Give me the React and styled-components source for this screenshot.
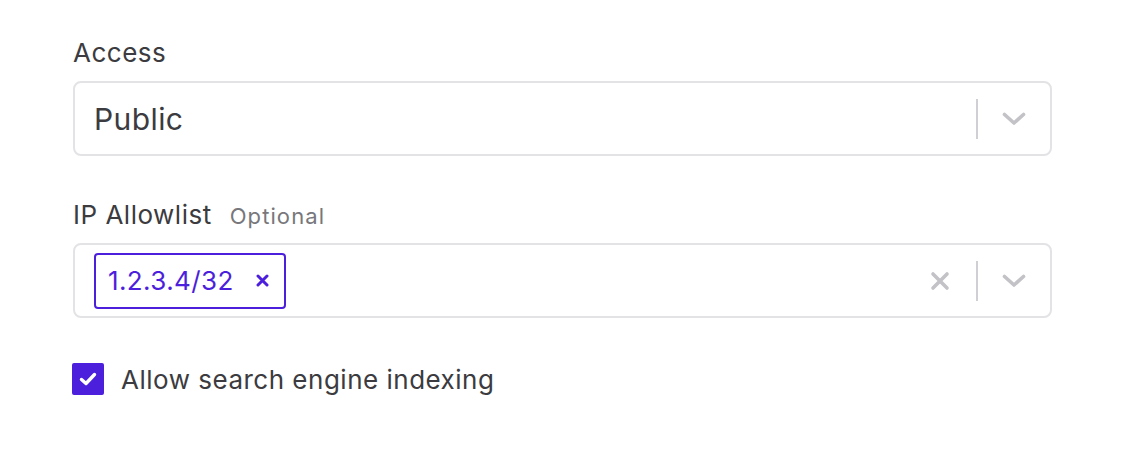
import React, { useState } from 'react'
import styled, { createGlobalStyle } from 'styled-components'

const GlobalStyle = createGlobalStyle`
    body{
        margin: 0;
        background: #fff;
        font-family: Inter, "Noto Sans", "Liberation Sans", sans-serif;
        color: #3b3b40;
    }
`;

function Chevron() {
    return (
        <svg width="24" height="14" viewBox="0 0 24 14" fill="none">
            <path d="M2.5 2.5 L12 11 L21.5 2.5" stroke="#c2c2c7" strokeWidth="3.6" strokeLinecap="round" strokeLinejoin="round" />
        </svg>
    )
}

function ClearIcon() {
    return (
        <svg width="20" height="20" viewBox="0 0 20 20" fill="none">
            <path d="M3 3 L17 17 M17 3 L3 17" stroke="#c2c2c7" strokeWidth="3.6" strokeLinecap="round" />
        </svg>
    )
}

function TagRemove() {
    return (
        <svg width="13" height="13" viewBox="0 0 13 13" fill="none">
            <path d="M2 2 L11 11 M11 2 L2 11" stroke="#4c1fdc" strokeWidth="3" strokeLinecap="round" />
        </svg>
    )
}

function Select({ children, clearable }) {
    return (
        <SelectBox>
            <ValueArea>{children}</ValueArea>
            <Indicators>
                {clearable && <ClearBtn><ClearIcon /></ClearBtn>}
                <Separator />
                <ChevronBtn><Chevron /></ChevronBtn>
            </Indicators>
        </SelectBox>
    )
}

function App() {
    const [indexing, setIndexing] = useState(true)

    return (
        <Page>
            <GlobalStyle />
            <Field>
                <Label>Access</Label>
                <Select>
                    <SingleValue>Public</SingleValue>
                </Select>
            </Field>

            <Field>
                <Label>IP Allowlist <Hint>Optional</Hint></Label>
                <Select clearable>
                    <Tag>
                        <span>1.2.3.4/32</span>
                        <TagX><TagRemove /></TagX>
                    </Tag>
                </Select>
            </Field>

            <CheckRow onClick={() => setIndexing(!indexing)}>
                <Box checked={indexing}>
                    {indexing && (
                        <svg width="18" height="14" viewBox="0 0 18 14" fill="none">
                            <path d="M2.5 7.5 L7 11.5 L15.5 2.5" stroke="#fff" strokeWidth="3.4" strokeLinecap="round" strokeLinejoin="round" />
                        </svg>
                    )}
                </Box>
                <span>Allow search engine indexing</span>
            </CheckRow>
        </Page>
    )
}

const Page = styled.div`
    width: 979px;
    padding: 37px 0 0 73px;
    display: flex;
    flex-direction: column;
    gap: 43px;
`;

const Field = styled.div`
    display: flex;
    flex-direction: column;
    gap: 13px;
`;

const Label = styled.label`
    height: 31px;
    font-size: 26px;
    line-height: 31px;
    letter-spacing: 0.5px;
    color: #3b3b40;
    display: flex;
    align-items: baseline;
    gap: 18px;
`;

const Hint = styled.span`
    font-size: 22px;
    line-height: 31px;
    letter-spacing: 1.1px;
    color: #77777c;
`;

const SelectBox = styled.div`
    box-sizing: border-box;
    height: 75px;
    border: 2px solid #e3e3e6;
    border-radius: 8px;
    display: flex;
    align-items: center;
    background: #fff;
`;

const ValueArea = styled.div`
    flex: 1;
    display: flex;
    align-items: center;
    padding: 0 19px;
`;

const SingleValue = styled.span`
    font-size: 30px;
    letter-spacing: 0.4px;
    color: #3b3b40;
`;

const Tag = styled.div`
    box-sizing: border-box;
    height: 56px;
    display: flex;
    align-items: center;
    gap: 22px;
    padding: 0 15px 0 12px;
    border: 2px solid #4c1fdc;
    border-radius: 4px;
    color: #4c1fdc;
    font-size: 26px;
    letter-spacing: 0.4px;
`;

const TagX = styled.span`
    display: flex;
    align-items: center;
`;

const Indicators = styled.div`
    display: flex;
    align-items: center;
    height: 100%;
    padding-right: 24px;
`;

const ClearBtn = styled.span`
    display: flex;
    padding-right: 26px;
`;

const Separator = styled.span`
    width: 2px;
    height: 40px;
    background: #d0d0d4;
`;

const ChevronBtn = styled.span`
    display: flex;
    padding-left: 24px;
`;

const CheckRow = styled.label`
    display: flex;
    align-items: center;
    gap: 17px;
    margin-top: 2px;
    font-size: 26px;
    letter-spacing: 0.5px;
    color: #3b3b40;
    cursor: pointer;
`;

const Box = styled.span`
    width: 32px;
    height: 32px;
    border-radius: 2px;
    background: ${p => p.checked ? '#4c1fdc' : '#fff'};
    border: ${p => p.checked ? 'none' : '2px solid #c2c2c7'};
    display: flex;
    align-items: center;
    justify-content: center;
    margin-left: -1px;
`;

export default App
